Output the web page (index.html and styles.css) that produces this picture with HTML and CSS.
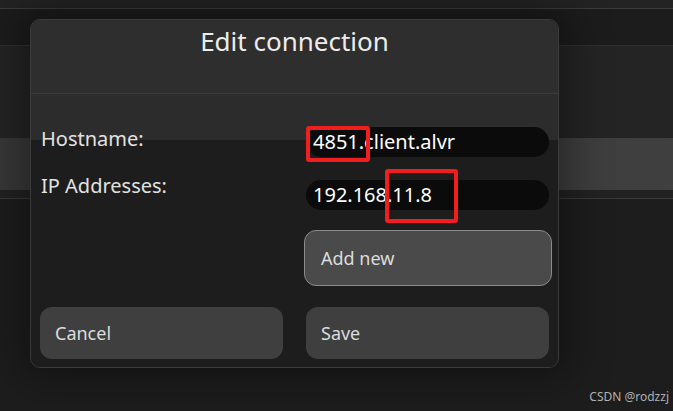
FILE: index.html
```html
<!doctype html>
<html>
<head>
<meta charset="utf-8">
<title>Edit connection</title>
<link rel="stylesheet" href="styles.css">
</head>
<body>
<div class="page">
	<div class="topbar"></div>
	<div class="tabs"></div>
	<div class="list">
		<div class="item"></div>
		<div class="sep"></div>
	</div>

	<div class="dialog">
		<div class="head">
			<h4>Edit connection</h4>
		</div>
		<div class="body">
			<div class="form">
				<div class="labels">
					<span>Hostname:</span>
					<span>IP Addresses:</span>
				</div>
				<div class="fields">
					<div class="field">4851.client.alvr<i class="mark m1"></i></div>
					<div class="field">192.168.11.8<i class="mark m2"></i></div>
					<a href="javascript:;" class="btn add">Add new</a>
				</div>
			</div>
			<div class="actions">
				<a href="javascript:;" class="btn">Cancel</a>
				<a href="javascript:;" class="btn">Save</a>
			</div>
		</div>
	</div>

	<div class="wm">CSDN @rodzzj</div>
</div>
</body>
</html>
```

FILE: styles.css
```css
*{margin:0;padding:0}
body{background:#1d1d1d;font-family:"Noto Sans","Open Sans",sans-serif;overflow:hidden}
.page{position:relative;width:673px;height:411px}

.topbar{height:8px;background:#232323;border-bottom:1px solid #3a3a3a}
.tabs{height:36px;background:#1c1c1c;border-bottom:1px solid #313131}
.list{background:#242424;padding-top:92px}
.list .item{height:52px;background:linear-gradient(to right,#383838,#3f3f3f)}
.list .sep{height:8px;background:#222;border-bottom:1px solid #393939}

/* dialog */
.dialog{position:absolute;left:30px;top:19px;width:527px;height:347px;border:1px solid #3b3b3b;border-radius:10px;overflow:hidden;background:#1d1d1d;box-shadow:0 0 40px 12px rgba(0,0,0,.35)}
.dialog .head{height:74px;background:#2e2e2e;border-bottom:1px solid #3a3a3a;padding-top:8px;box-sizing:border-box}
.dialog h4{font-size:26px;line-height:26px;font-weight:normal;color:#ececec;text-align:center}

.dialog .body{background:linear-gradient(#2c2c2c 46px,#1d1d1d 46px);padding:33px 9px 8px 9px;height:273px;box-sizing:border-box}
.form{display:flex;column-gap:23px}
.labels{flex:1;display:flex;flex-direction:column;padding-left:1px}
.labels span{font-size:20px;line-height:24px;color:#e2e2e2}
.labels span+span{margin-top:23px}
.fields{width:243px;display:flex;flex-direction:column}

.field{position:relative;height:30px;line-height:30px;border-radius:15px;background:#0b0b0b;color:#fff;font-size:20px;padding-left:7px}
.field+.field{margin-top:23px}
/* red highlight boxes */
.mark{position:absolute;border:4px solid #f01e1e;border-radius:3px;box-sizing:border-box}
.m1{left:0;top:-1px;width:64px;height:36px}
.m2{left:79px;top:-11px;width:73px;height:54px}

.btn{display:flex;align-items:center;height:52px;border-radius:12px;background:#3f3f3f;color:#dcdcdc;font-size:18px;text-decoration:none;padding-left:15px;box-sizing:border-box}
.btn.add{margin:20px -3px 0 -2px;height:56px;background:#4a4a4a;border:1px solid #8a8a8a;padding-left:16px}
.actions{display:grid;grid-template-columns:243px 243px;column-gap:23px;margin-top:21px}

.wm{position:absolute;right:4px;bottom:6px;font-size:12px;color:#b0b0b0}
```
